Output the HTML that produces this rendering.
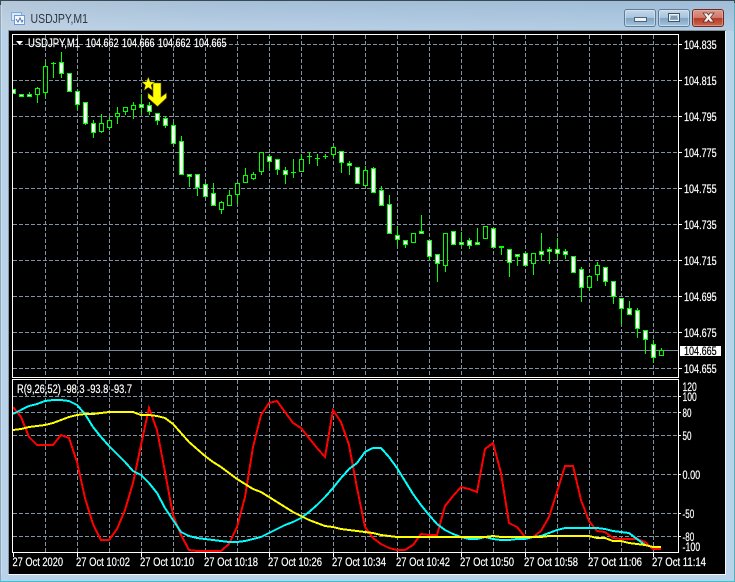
<!DOCTYPE html>
<html><head><meta charset="utf-8"><title>USDJPY,M1</title>
<style>
html,body{margin:0;padding:0;background:#2fc6d6;width:735px;height:582px;overflow:hidden}
svg{display:block}
text{font-family:"Liberation Sans",sans-serif;font-size:11.5px;fill:#fff;stroke:#fff;stroke-width:.2px}
</style></head><body>
<svg width="735" height="582" viewBox="0 0 735 582" xmlns="http://www.w3.org/2000/svg">
<defs>
<linearGradient id="tb" x1="0" y1="0" x2="0" y2="1"><stop offset="0" stop-color="#a3bdd6"/><stop offset="1" stop-color="#bcd3e8"/></linearGradient>
<linearGradient id="tbh" x1="0" y1="0" x2="1" y2="0"><stop offset="0" stop-color="#c8d3dd" stop-opacity=".45"/><stop offset=".4" stop-color="#a8c4de" stop-opacity=".2"/><stop offset="1" stop-color="#98bad8" stop-opacity=".3"/></linearGradient>
<linearGradient id="bt" x1="0" y1="0" x2="0" y2="1"><stop offset="0" stop-color="#c6d9ea"/><stop offset=".48" stop-color="#a9c4dc"/><stop offset=".52" stop-color="#7fa3c4"/><stop offset="1" stop-color="#a6c6e0"/></linearGradient>
<linearGradient id="cl" x1="0" y1="0" x2="0" y2="1"><stop offset="0" stop-color="#dd9c90"/><stop offset=".48" stop-color="#cf7a6c"/><stop offset=".52" stop-color="#b43a28"/><stop offset="1" stop-color="#cf6a50"/></linearGradient>
<clipPath id="mc"><rect x="13" y="35" width="665" height="342"/></clipPath>
<clipPath id="sc"><rect x="13" y="380" width="665" height="172"/></clipPath>
</defs>

<!-- window frame -->
<rect x="0" y="0" width="735" height="582" fill="#2fc6d6"/>
<rect x="0" y="0" width="735" height="30" fill="#3a4a55"/>
<path d="M1 581V5q0-4 4-4H729q5 0 5 4V581z" fill="#b8d2ea"/>
<rect x="1" y="1" width="733" height="30" fill="url(#tb)"/>
<rect x="1" y="1" width="733" height="30" fill="url(#tbh)"/>
<rect x="0" y="5" width="1" height="576" fill="#8fa6b8"/>
<rect x="1" y="30" width="7" height="551" fill="#b9d3ea"/>
<rect x="1" y="5" width="1" height="570" fill="#d8e6f2" opacity=".6"/>
<rect x="8" y="30" width="718" height="1" fill="#7c8a96"/>
<rect x="8" y="30" width="1" height="544" fill="#8a98a4"/>
<rect x="725" y="31" width="1" height="544" fill="#f4f8fb"/>
<rect x="8" y="574" width="718" height="1" fill="#f4f8fb"/>
<rect x="1" y="581" width="734" height="1" fill="#2fc6d6"/>
<rect x="734" y="3" width="1" height="579" fill="#5aaebc"/>

<!-- title icon -->
<g shape-rendering="crispEdges">
<rect x="11" y="12" width="11" height="9" fill="#7fa8dc"/>
<rect x="12" y="13" width="9" height="7" fill="#dce9f7"/>
<rect x="14" y="15" width="11" height="10" fill="#6f9bd4"/>
<rect x="15" y="16" width="9" height="8" fill="#f4f8fd"/>
</g>
<path d="M16 19l2 3 2-4 2 4 1-2" fill="none" stroke="#4a78b8" stroke-width="1"/>
<text x="30.5" y="23" style="font-size:12.5px;fill:#2b3744;stroke:none" textLength="57.5" lengthAdjust="spacingAndGlyphs">USDJPY,M1</text>

<!-- buttons -->
<rect x="624.5" y="9.5" width="31" height="17" rx="2.5" fill="url(#bt)" stroke="#5f7a94"/>
<rect x="625.5" y="10.5" width="29" height="15" rx="1.5" fill="none" stroke="#e3edf6" stroke-opacity=".55"/>
<rect x="634.5" y="17.5" width="12" height="4" fill="#eef3f7" stroke="#4f6374"/>
<rect x="658.5" y="9.5" width="31" height="17" rx="2.5" fill="url(#bt)" stroke="#5f7a94"/>
<rect x="659.5" y="10.5" width="29" height="15" rx="1.5" fill="none" stroke="#e3edf6" stroke-opacity=".55"/>
<rect x="668.5" y="13.5" width="11" height="8" fill="none" stroke="#3f5364"/>
<rect x="669.5" y="14.5" width="9" height="6" fill="none" stroke="#eef3f7"/>
<rect x="671" y="16" width="6" height="3" fill="#7f9ab2"/>
<rect x="692.5" y="9.5" width="31" height="17" rx="2.5" fill="url(#cl)" stroke="#6d2a22"/>
<rect x="693.5" y="10.5" width="29" height="15" rx="1.5" fill="none" stroke="#efb8ae" stroke-opacity=".5"/>
<path d="M703 13h4l1.500 2 1.500-2h4l-3.500 4.500 3.500 4.500h-4l-1.500-2-1.500 2h-4l3.500-4.500z" fill="#f6f2f0" stroke="#5e2a24" stroke-width=".7"/>

<!-- chart area -->
<rect x="9" y="31" width="716" height="543" fill="#000"/>

<!-- grid -->
<g fill="none" stroke="#8291a3" stroke-width="1" stroke-dasharray="4 2" shape-rendering="crispEdges">
<path d="M13 44.500H678M13 80.500H678M13 116.500H678M13 152.500H678M13 188.500H678M13 224.500H678M13 260.500H678M13 296.500H678M13 332.500H678M13 368.500H678"/>
<path d="M45.500 35V377M77.500 35V377M109.500 35V377M141.500 35V377M173.500 35V377M205.500 35V377M237.500 35V377M269.500 35V377M301.500 35V377M333.500 35V377M365.500 35V377M397.500 35V377M429.500 35V377M461.500 35V377M493.500 35V377M525.500 35V377M557.500 35V377M589.500 35V377M621.500 35V377M653.500 35V377"/>
<path d="M13 396.500H678M13 412.500H678M13 435.500H678M13 474.500H678M13 513.500H678M13 536.500H678"/>
<path d="M45.500 380V552M77.500 380V552M109.500 380V552M141.500 380V552M173.500 380V552M205.500 380V552M237.500 380V552M269.500 380V552M301.500 380V552M333.500 380V552M365.500 380V552M397.500 380V552M429.500 380V552M461.500 380V552M493.500 380V552M525.500 380V552M557.500 380V552M589.500 380V552M621.500 380V552M653.500 380V552"/>
</g>

<!-- price line -->
<path d="M13 350.500H678" stroke="#778899" shape-rendering="crispEdges"/>

<!-- candles -->
<g clip-path="url(#mc)" shape-rendering="crispEdges" stroke="#00ff00" stroke-width="1">
<path fill="none" d="M29.500 92V94M37.500 87V103M45.500 62V97M53.500 62V78M61.500 52V78M77.500 104V110M85.500 123V125M93.500 120V138M101.500 114V133M109.500 117V130M117.500 107V124M125.500 111V115M133.500 102V119M141.500 94V114M149.500 102V115M157.500 120V125M165.500 116V128M173.500 123V145M181.500 136V175M189.500 174V187M197.500 187V196M205.500 183V196M213.500 183V205M221.500 201V214M229.500 190V205M237.500 194V204M245.500 168V182M253.500 172V180M261.500 171V175M269.500 154V169M277.500 169V175M285.500 167V184M293.500 159V178M301.500 154V171M309.500 152V164M317.500 154V166M325.500 154V159M333.500 146V157M341.500 162V173M349.500 161V175M365.500 166V187M373.500 167V192M381.500 186V205M389.500 195V233M397.500 226V246M405.500 244V248M421.500 215V233M429.500 256V260M437.500 263V282M445.500 265V272M461.500 232V244M469.500 238V249M477.500 228V244M493.500 227V247M501.500 247V255M509.500 262V277M517.500 254V266M533.500 263V275M541.500 233V261M549.500 247V264M557.500 238V258M565.500 249V259M573.500 272V273M581.500 267V302M589.500 275V290M597.500 262V281M605.500 281V286M613.500 296V304M621.500 308V324M629.500 301V314M637.500 308V338M645.500 339V354M653.500 340V363M661.500 348V355"/>
<path fill="none" d="M51 63.500h5M291 172.500h5M307 156.500h5M315 158.500h5M323 156.500h5"/>
<path fill="#000" d="M35.500 88.500h4v6h-4zM43.500 66.500h4v26h-4zM99.500 123.500h4v8h-4zM107.500 120.500h4v7h-4zM115.500 113.500h4v3h-4zM123.500 107.500h4v4h-4zM131.500 105.500h4v4h-4zM219.500 202.500h4v7h-4zM227.500 195.500h4v10h-4zM235.500 183.500h4v11h-4zM243.500 175.500h4v7h-4zM251.500 174.500h4v4h-4zM259.500 152.500h4v19h-4zM299.500 159.500h4v12h-4zM331.500 147.500h4v7h-4zM363.500 170.500h4v15h-4zM411.500 233.500h4v9h-4zM443.500 233.500h4v32h-4zM483.500 226.500h4v12h-4zM531.500 253.500h4v10h-4zM587.500 276.500h4v11h-4zM595.500 265.500h4v9h-4zM659.500 350.500h4v5h-4z"/>
<path fill="#fff" d="M11.500 89.500h4v4h-4zM19.500 94.500h4v2h-4zM27.500 94.500h4v2h-4zM59.500 62.500h4v11h-4zM67.500 73.500h4v18h-4zM75.500 91.500h4v13h-4zM83.500 102.500h4v21h-4zM91.500 123.500h4v9h-4zM139.500 104.500h4v3h-4zM147.500 105.500h4v6h-4zM155.500 113.500h4v7h-4zM163.500 118.500h4v7h-4zM171.500 125.500h4v18h-4zM179.500 141.500h4v33h-4zM187.500 174.500h4v2h-4zM195.500 174.500h4v13h-4zM203.500 184.500h4v12h-4zM211.500 193.500h4v12h-4zM267.500 156.500h4v5h-4zM275.500 159.500h4v10h-4zM283.500 170.500h4v4h-4zM339.500 151.500h4v11h-4zM347.500 163.500h4v2h-4zM355.500 167.500h4v16h-4zM371.500 168.500h4v24h-4zM379.500 190.500h4v15h-4zM387.500 204.500h4v29h-4zM395.500 235.500h4v4h-4zM403.500 240.500h4v4h-4zM419.500 231.500h4v2h-4zM427.500 240.500h4v16h-4zM435.500 254.500h4v9h-4zM451.500 231.500h4v13h-4zM459.500 242.500h4v2h-4zM467.500 240.500h4v5h-4zM475.500 242.500h4v2h-4zM491.500 228.500h4v19h-4zM499.500 246.500h4v1h-4zM507.500 249.500h4v13h-4zM515.500 254.500h4v2h-4zM523.500 253.500h4v12h-4zM539.500 251.500h4v3h-4zM547.500 249.500h4v2h-4zM555.500 249.500h4v4h-4zM563.500 251.500h4v3h-4zM571.500 256.500h4v16h-4zM579.500 269.500h4v18h-4zM603.500 267.500h4v14h-4zM611.500 281.500h4v15h-4zM619.500 298.500h4v10h-4zM627.500 308.500h4v6h-4zM635.500 310.500h4v18h-4zM643.500 330.500h4v9h-4zM651.500 344.500h4v13h-4z"/>
</g>

<!-- arrow and star -->
<path d="M153 83H161V97L166.500 93V98L157.500 106.500 148 98V93L153 97z" fill="#ffff00" stroke="#6a5a00" stroke-width=".6"/>
<path d="M148.300 77l1.800 4.800 4.700.2-3.700 3 1.300 5.200-4.100-2.800-4.100 2.800 1.300-5.200-3.700-3 4.700-.2z" fill="#ffff00" stroke="#6a5a00" stroke-width=".5"/>

<!-- indicator lines -->
<g clip-path="url(#sc)" fill="none" stroke-width="2" stroke-linejoin="miter" shape-rendering="crispEdges">
<polyline stroke="#ff0000" points="13,407 21,417 29,437 37,445 45,445 53,445 61,435 69,438 77,462 85,498 93,524 101,540 109,540 117,529 125,510 133,483 141,445 149,408 157,430 165,472 173,515 181,535 189,550 197,551 205,551 213,551 221,551 229,544 237,527 245,497 253,447 261,415 269,403 277,401 285,412 293,423 301,428 309,438 317,448 325,457 333,410 341,422 349,445 357,488 365,527 373,538 381,544 389,548 397,550 405,550 413,545 421,534 429,535 437,535 445,506 453,496 461,487 469,489 477,492 485,449 493,443 501,473 509,523 517,527 525,537 533,537 541,531 549,517 557,492 565,466 573,466 581,500 589,521 597,531 605,532 613,538 621,539 629,539 637,539 645,542 653,549 661,549"/>
<polyline stroke="#00ffff" points="13,414 21,410 29,406 37,404 45,401 53,400 61,400 69,401 77,405 85,414 93,427 101,437 109,446 117,454 125,462 133,471 141,475 149,483 157,493 165,508 173,520 181,532 189,536 197,538 205,539 213,540 221,541 229,542 237,542 245,541 253,539 261,537 269,533 277,529 285,525 293,522 301,518 309,512 317,505 325,497 333,488 341,478 349,469 357,463 365,452 373,448 381,448 389,457 397,468 405,481 413,494 421,505 429,515 437,524 445,530 453,534 461,537 469,539 477,539 485,537 493,539 501,540 509,540 517,539 525,539 533,537 541,536 549,533 557,530 565,528 573,528 581,528 589,528 597,528 605,529 613,531 621,532 629,533 637,539 645,545 653,547 661,547"/>
<polyline stroke="#ffff00" points="13,430 21,429 29,427 37,426 45,425 53,423 61,420 69,417 77,415 85,414 93,414 101,413 109,412 117,412 125,412 133,412 141,415 149,415 157,416 165,418 173,424 181,433 189,442 197,449 205,456 213,462 221,467 229,473 237,479 245,484 253,489 261,492 269,497 277,502 285,507 293,512 301,516 309,520 317,523 325,526 333,527 341,529 349,530 357,531 365,532 373,533 381,535 389,536 397,537 405,537 413,537 421,537 429,537 437,537 445,537 453,537 461,537 469,537 477,537 485,537 493,536 501,537 509,537 517,537 525,537 533,537 541,537 549,536 557,536 565,536 573,536 581,536 589,536 597,538 605,538 613,541 621,541 629,543 637,544 645,545 653,547 661,547"/>
</g>

<!-- chart frames and ticks -->
<g fill="none" stroke="#fff" stroke-width="1" shape-rendering="crispEdges">
<rect x="12.500" y="34.500" width="666" height="343"/>
<rect x="12.500" y="379.500" width="666" height="173"/>
<path d="M679 44.500h3M679 80.500h3M679 116.500h3M679 152.500h3M679 188.500h3M679 224.500h3M679 260.500h3M679 296.500h3M679 332.500h3M679 368.500h3"/>
<path d="M679 396.500h2M679 412.500h2M679 435.500h2M679 474.500h2M679 513.500h2M679 536.500h2"/>
<path d="M13.500 553v4M77.500 553v4M141.500 553v4M205.500 553v4M269.500 553v4M333.500 553v4M397.500 553v4M461.500 553v4M525.500 553v4M589.500 553v4M653.500 553v4"/>
</g>

<!-- labels -->
<path d="M16 41h7l-3.500 4z" fill="#fff"/>
<text x="28" y="47" textLength="52" lengthAdjust="spacingAndGlyphs">USDJPY,M1</text>
<text x="86" y="47" textLength="32.500" lengthAdjust="spacingAndGlyphs">104.662</text>
<text x="122" y="47" textLength="32.500" lengthAdjust="spacingAndGlyphs">104.666</text>
<text x="158" y="47" textLength="32.500" lengthAdjust="spacingAndGlyphs">104.662</text>
<text x="194" y="47" textLength="32.500" lengthAdjust="spacingAndGlyphs">104.665</text>
<text x="17" y="393" textLength="115" lengthAdjust="spacingAndGlyphs">R(9,26,52) -98.3 -93.8 -93.7</text>

<g>
<text x="684" y="49" textLength="32.700" lengthAdjust="spacingAndGlyphs">104.835</text>
<text x="684" y="85" textLength="32.700" lengthAdjust="spacingAndGlyphs">104.815</text>
<text x="684" y="121" textLength="32.700" lengthAdjust="spacingAndGlyphs">104.795</text>
<text x="684" y="157" textLength="32.700" lengthAdjust="spacingAndGlyphs">104.775</text>
<text x="684" y="193" textLength="32.700" lengthAdjust="spacingAndGlyphs">104.755</text>
<text x="684" y="229" textLength="32.700" lengthAdjust="spacingAndGlyphs">104.735</text>
<text x="684" y="265" textLength="32.700" lengthAdjust="spacingAndGlyphs">104.715</text>
<text x="684" y="301" textLength="32.700" lengthAdjust="spacingAndGlyphs">104.695</text>
<text x="684" y="337" textLength="32.700" lengthAdjust="spacingAndGlyphs">104.675</text>
<text x="684" y="373" textLength="32.700" lengthAdjust="spacingAndGlyphs">104.655</text>
</g>
<rect x="680" y="346" width="41" height="10" fill="#fff"/>
<text x="684" y="355" style="fill:#000;stroke:#000" textLength="32.700" lengthAdjust="spacingAndGlyphs">104.665</text>

<text x="682.500" y="391" textLength="14.300" lengthAdjust="spacingAndGlyphs">120</text>
<text x="682.500" y="401" textLength="14.300" lengthAdjust="spacingAndGlyphs">100</text>
<text x="682.500" y="417" textLength="9" lengthAdjust="spacingAndGlyphs">80</text>
<text x="682.500" y="440" textLength="9" lengthAdjust="spacingAndGlyphs">50</text>
<text x="682.500" y="479" textLength="17.700" lengthAdjust="spacingAndGlyphs">0.00</text>
<text x="682.500" y="518" textLength="11.700" lengthAdjust="spacingAndGlyphs">-50</text>
<text x="682.500" y="541" textLength="11.700" lengthAdjust="spacingAndGlyphs">-80</text>
<text x="682.500" y="551" textLength="17.700" lengthAdjust="spacingAndGlyphs">-100</text>

<text x="12.500" y="566" textLength="50.500" lengthAdjust="spacingAndGlyphs">27 Oct 2020</text>
<text x="76" y="566" textLength="54" lengthAdjust="spacingAndGlyphs">27 Oct 10:02</text>
<text x="140" y="566" textLength="54" lengthAdjust="spacingAndGlyphs">27 Oct 10:10</text>
<text x="204" y="566" textLength="54" lengthAdjust="spacingAndGlyphs">27 Oct 10:18</text>
<text x="268" y="566" textLength="54" lengthAdjust="spacingAndGlyphs">27 Oct 10:26</text>
<text x="332" y="566" textLength="54" lengthAdjust="spacingAndGlyphs">27 Oct 10:34</text>
<text x="396" y="566" textLength="54" lengthAdjust="spacingAndGlyphs">27 Oct 10:42</text>
<text x="460" y="566" textLength="54" lengthAdjust="spacingAndGlyphs">27 Oct 10:50</text>
<text x="524" y="566" textLength="54" lengthAdjust="spacingAndGlyphs">27 Oct 10:58</text>
<text x="588" y="566" textLength="54" lengthAdjust="spacingAndGlyphs">27 Oct 11:06</text>
<text x="652" y="566" textLength="54" lengthAdjust="spacingAndGlyphs">27 Oct 11:14</text>
</svg>
</body></html>
